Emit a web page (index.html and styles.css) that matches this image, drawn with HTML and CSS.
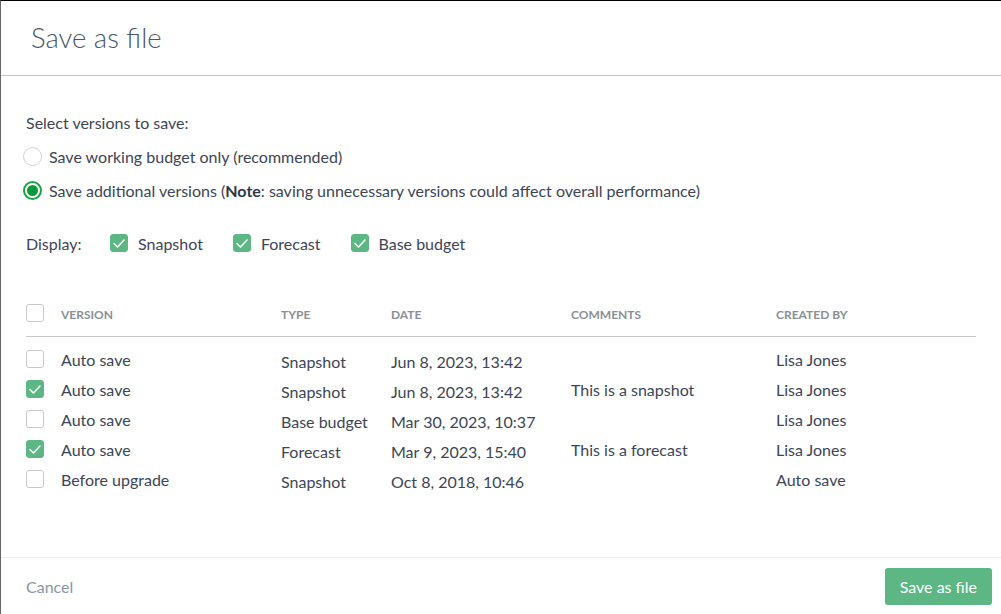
FILE: index.html
```html
<!DOCTYPE html>
<html>
<head>
<meta charset="utf-8">
<link rel="stylesheet" href="styles.css">
</head>
<body>
<div class="dialog">
  <header class="head"><h1>Save as file</h1></header>
  <main class="content">
    <p class="lead">Select versions to save:</p>
    <label class="radio"><span class="rdot"></span><span>Save working budget only (recommended)</span></label>
    <label class="radio"><span class="rdot on"></span><span>Save additional versions (<b>Note</b>: saving unnecessary versions could affect overall performance)</span></label>
    <div class="display">
      <span class="dlabel">Display:</span>
      <label class="chk"><span class="box on"><svg viewBox="0 0 18 18"><path d="M4 9.5l3.5 3.5 6.5-7"/></svg></span>Snapshot</label>
      <label class="chk"><span class="box on"><svg viewBox="0 0 18 18"><path d="M4 9.5l3.5 3.5 6.5-7"/></svg></span>Forecast</label>
      <label class="chk"><span class="box on"><svg viewBox="0 0 18 18"><path d="M4 9.5l3.5 3.5 6.5-7"/></svg></span>Base budget</label>
    </div>
    <div class="table">
      <div class="row th">
        <span class="box"></span><span>VERSION</span><span>TYPE</span><span>DATE</span><span>COMMENTS</span><span>CREATED BY</span>
      </div>
      <div class="row">
        <span class="box"></span><span>Auto save</span><span class="lo">Snapshot</span><span class="lo">Jun 8, 2023, 13:42</span><span></span><span>Lisa Jones</span>
      </div>
      <div class="row">
        <span class="box on"><svg viewBox="0 0 18 18"><path d="M4 9.5l3.5 3.5 6.5-7"/></svg></span><span>Auto save</span><span class="lo">Snapshot</span><span class="lo">Jun 8, 2023, 13:42</span><span>This is a snapshot</span><span>Lisa Jones</span>
      </div>
      <div class="row">
        <span class="box"></span><span>Auto save</span><span class="lo">Base budget</span><span class="lo">Mar 30, 2023, 10:37</span><span></span><span>Lisa Jones</span>
      </div>
      <div class="row">
        <span class="box on"><svg viewBox="0 0 18 18"><path d="M4 9.5l3.5 3.5 6.5-7"/></svg></span><span>Auto save</span><span class="lo">Forecast</span><span class="lo">Mar 9, 2023, 15:40</span><span>This is a forecast</span><span>Lisa Jones</span>
      </div>
      <div class="row">
        <span class="box"></span><span>Before upgrade</span><span class="lo">Snapshot</span><span class="lo">Oct 8, 2018, 10:46</span><span></span><span>Auto save</span>
      </div>
    </div>
  </main>
  <footer class="foot">
    <button class="cancel">Cancel</button>
    <button class="save">Save as file</button>
  </footer>
</div>
</body>
</html>
```
FILE: styles.css
```css
* { box-sizing: border-box; }
html, body { margin: 0; padding: 0; height: 100%; }
body {
  background: #fff;
  font-family: Lato, "Open Sans", sans-serif;
  font-size: 16px;
  color: #3c4555;
  border-top: 1px solid #000;
  border-left: 1px solid #666;
}
.dialog { display: flex; flex-direction: column; height: 613px; }
.head {
  height: 75px;
  border-bottom: 1px solid #c4c4c4;
  display: flex;
  align-items: center;
  padding-left: 30px;
}
.head h1 {
  margin: 0;
  font-weight: 300;
  font-size: 27.5px;
  color: #4a5566;
  position: relative;
  top: -1px;
}
.content { flex: 1; padding: 35px 25px 0 25px; }
.lead { margin: 0 0 4px 0; line-height: 24px; }
.radio {
  display: flex;
  align-items: center;
  gap: 7px;
  height: 34px;
  margin-left: -3px;
}
.rdot {
  width: 19px; height: 19px;
  border: 1.5px solid #d3d3d3;
  border-radius: 50%;
  display: inline-block;
  flex: none;
  position: relative;
}
.rdot.on { border: 2px solid #1ba542; }
.rdot.on::after {
  content: ""; position: absolute;
  left: 2px; top: 2px; width: 11px; height: 11px;
  border-radius: 50%; background: #0b9a3b;
}
.radio b { font-weight: 700; color: #2e3746; }
.display {
  display: flex; align-items: center;
  margin-top: 21px;
  height: 30px;
}
.dlabel { width: 84px; }
.chk { display: flex; align-items: center; gap: 10px; margin-right: 30px; }
.box {
  width: 18px; height: 18px;
  border: 1px solid #c9c9c9;
  border-radius: 3px;
  display: inline-block;
  flex: none;
  background: #fff;
}
.box.on { background: #5cb784; border-color: #5cb784; }
.box svg { width: 18px; height: 18px; display: block; margin: -1px; }
.box path { fill: none; stroke: #fff; stroke-width: 1.5; stroke-linecap: round; stroke-linejoin: round; }
.table { margin-top: 38px; }
.row {
  display: grid;
  grid-template-columns: 35px 220px 110px 180px 205px 1fr;
  align-items: center;
  height: 30px;
}
.row .lo { position: relative; top: 2px; }
.th {
  height: 41px;
  border-bottom: 1px solid #c9c9c9;
  font-size: 12px;
  font-weight: 700;
  color: #8a8f98;
  margin-bottom: 7px;
  align-items: start;
  padding-top: 8px;
}
.th span:not(.box) { line-height: 18px; position: relative; top: 2px; }
.foot {
  height: 57px;
  border-top: 1px solid #eeeeee;
  display: flex; align-items: center; justify-content: space-between;
  padding: 0 9px 0 25px;
}
button { font-family: inherit; font-size: 16px; border: none; cursor: pointer; }
.cancel { background: none; color: #8796a8; padding: 0; }
.save {
  background: #5cb784; color: #fff;
  border-radius: 3px;
  height: 37px; padding: 0 15px;
}
```
